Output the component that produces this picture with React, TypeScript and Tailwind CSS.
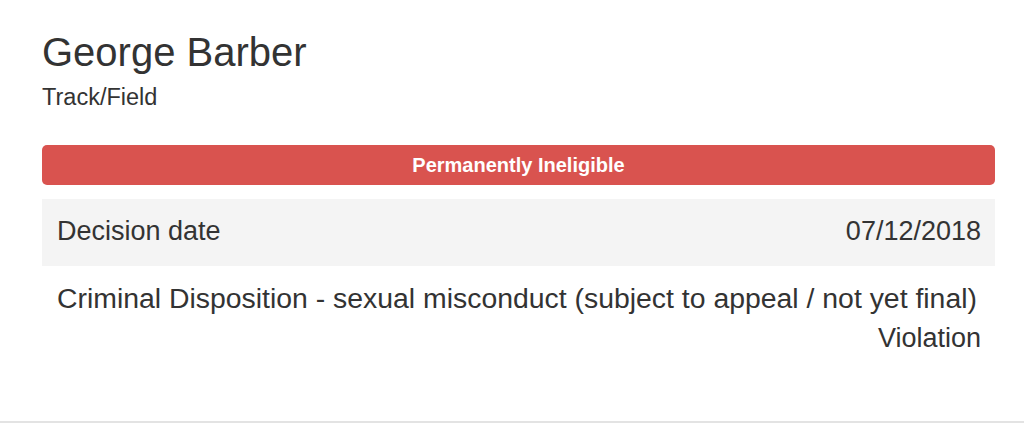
import React from "react";

const App: React.FC = () => {
  return (
    <div
      className="w-[1024px] h-[440px] bg-white text-[#333] overflow-hidden"
      style={{ fontFamily: '"Liberation Sans", Arial, sans-serif' }}
    >
      <div className="border-b-2 border-[#e3e3e3] pl-[42px] pr-[29px] pt-[30px] pb-[63px]">
        {/* Athlete header */}
        <h1 className="text-[40px] leading-[44px] font-normal">George Barber</h1>
        <div className="mt-[8px] text-[23.5px] leading-[30px]">Track/Field</div>

        {/* Status bar */}
        <div className="mt-[33px] h-[40px] rounded-[5px] bg-[#d9534f] flex items-center justify-center">
          <span className="text-white font-bold text-[20px] leading-none">
            Permanently Ineligible
          </span>
        </div>

        {/* Decision row */}
        <div className="mt-[14px] h-[67px] bg-[#f4f4f4] flex justify-between pl-[15px] pr-[14px] pt-[16px]">
          <span className="text-[27px] leading-[32px]">Decision date</span>
          <span className="text-[27px] leading-[32px]">07/12/2018</span>
        </div>

        {/* Violation detail */}
        <div className="pt-[12px] pl-[15px] pr-[14px]">
          <div className="text-[28.4px] leading-[40px] whitespace-nowrap">
            Criminal Disposition - sexual misconduct (subject to appeal / not yet final)
          </div>
          <div className="text-[27px] leading-[40px] text-right">Violation</div>
        </div>
      </div>
    </div>
  );
};

export default App;
